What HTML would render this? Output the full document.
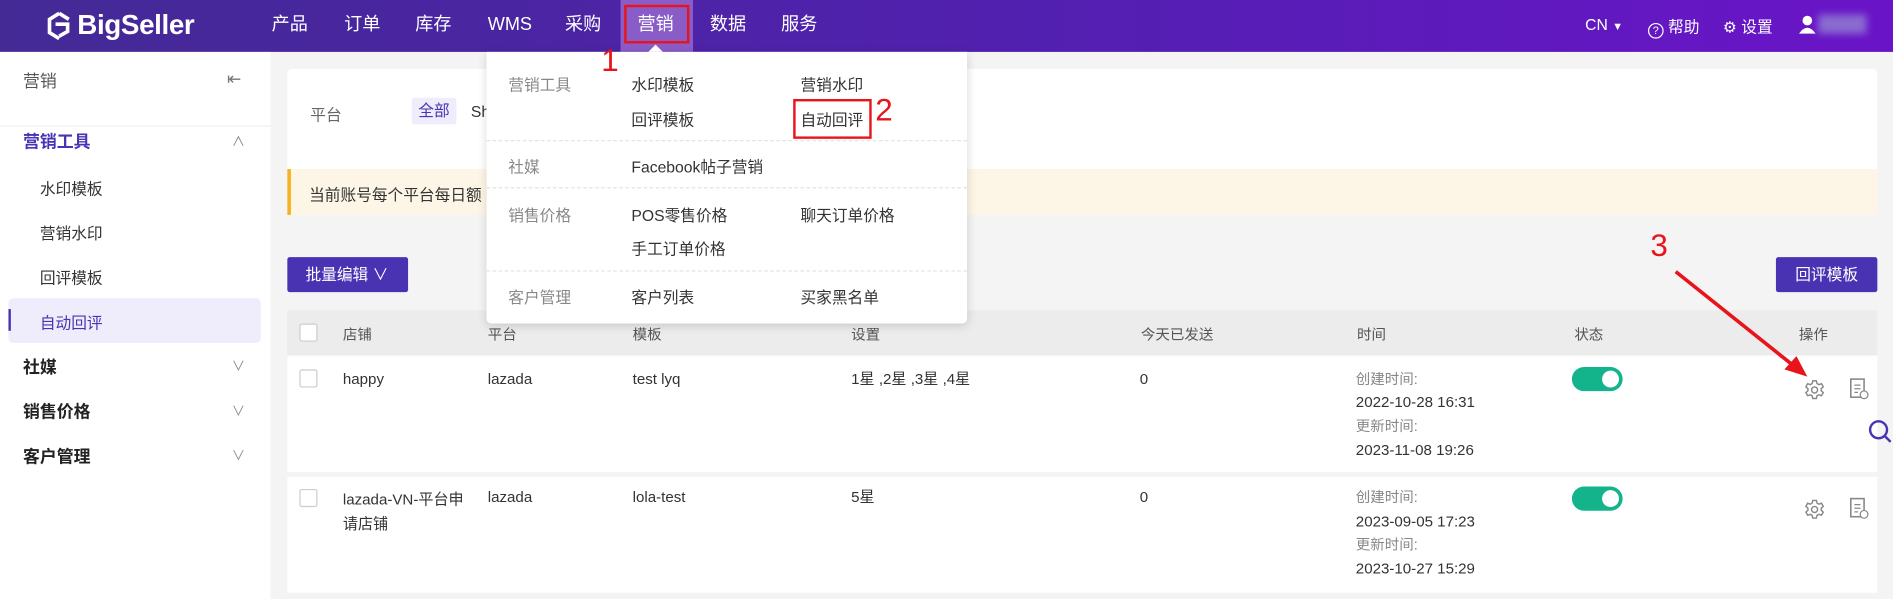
<!DOCTYPE html>
<html><head><meta charset="utf-8"><style>
html,body{margin:0;padding:0;width:1893px;height:599px;overflow:hidden;background:#f4f4f4}
#w{position:absolute;left:0;top:0;width:1568px;height:496px;transform:scale(1.2073);transform-origin:0 0;font-family:"Liberation Sans","Noto Sans CJK SC",sans-serif;font-size:13px;color:#333;background:#f4f4f4}
.a{position:absolute;white-space:nowrap}
#hd{position:absolute;left:0;top:0;width:1568px;height:43px;background:linear-gradient(90deg,#432a95,#5220b0 55%,#6a14c8)}
.nav{color:#fff;font-size:15px;top:11px;line-height:20px;height:20px}
#sb{position:absolute;left:0;top:43px;width:224px;height:453px;background:#fff}
.mi{left:33px;font-size:13px;color:#333}
.mg{left:19px;font-size:14px;font-weight:bold;color:#222}
.chev{left:192px;color:#888;font-size:11px}
.card{position:absolute;background:#fff;border-radius:4px}
.th{top:268px;color:#555;font-size:12px}
.td{font-size:12.5px;color:#333;line-height:16px}
.tm{font-size:12px;color:#888;line-height:16px}
.tog{position:absolute;width:42px;height:20px;border-radius:10px;background:#13b38b}
.tog:after{content:"";position:absolute;right:3px;top:3px;width:14px;height:14px;border-radius:7px;background:#fff}
.cb{position:absolute;width:13px;height:13px;border:1px solid #ccc;border-radius:2px;background:#fff}
#dd{position:absolute;left:403px;top:43px;width:398px;height:225px;background:#fff;box-shadow:0 2px 8px rgba(0,0,0,.15);border-radius:0 0 4px 4px}
.dl{color:#888;font-size:13px}.di{color:#333;font-size:13px}
.sep{position:absolute;left:0;width:398px;border-top:1px dashed #e4e4e4}
.red{position:absolute;border:2px solid #e8141b}
.rn{color:#e8141b;font-size:26px;font-family:"Liberation Sans",sans-serif}
</style></head><body><div id="w">
<div id="hd">
<svg class="a" style="left:38px;top:9px" width="22" height="26" viewBox="0 0 22 26"><path d="M11 2 L3 7 V18 L11 23 M11 2 L19 7 M8 11 H18 V17 L11 21" fill="none" stroke="#fff" stroke-width="3"/></svg>
<div class="a" style="left:64px;top:7px;color:#fff;font-size:23px;font-weight:bold;letter-spacing:-0.3px">BigSeller</div>
<div class="a nav" style="left:225px">产品</div><div class="a nav" style="left:285px">订单</div><div class="a nav" style="left:344px">库存</div><div class="a nav" style="left:404px">WMS</div><div class="a nav" style="left:468px">采购</div>
<div class="a" style="left:514px;top:0;width:60px;height:43px;background:#8a5cc8"></div>
<div class="a nav" style="left:528px">营销</div><div class="a nav" style="left:588px">数据</div><div class="a nav" style="left:647px">服务</div>
<div class="a" style="left:1313px;top:13px;color:#fff;font-size:13px">CN <span style="font-size:9px">▼</span></div>
<div class="a" style="left:1365px;top:12px;color:#fff;font-size:13px"><span style="display:inline-block;width:11px;height:11px;border:1.5px solid #fff;border-radius:50%;font-size:9px;text-align:center;line-height:11px;vertical-align:-1px">?</span> 帮助</div>
<div class="a" style="left:1427px;top:12px;color:#fff;font-size:13px">⚙ 设置</div>
<svg class="a" style="left:1489px;top:12px" width="16" height="16"><circle cx="8" cy="5" r="4" fill="#fff"/><path d="M1 16 Q8 6 15 16Z" fill="#fff"/></svg>
<div class="a" style="left:1506px;top:12px;width:40px;height:16px;background:#8a6bd0;filter:blur(3px)"></div>
</div>
<div id="sb">
<div class="a" style="left:19px;top:14px;font-size:14px;color:#555">营销</div>
<div class="a" style="left:188px;top:14px;color:#777;font-size:14px">⇤</div>
<div class="a" style="left:0;top:61px;width:224px;border-top:1px solid #eee"></div>
<div class="a mg" style="top:64px;color:#4a33b3">营销工具</div><div class="a chev" style="top:66px">∧</div>
<div class="a mi" style="top:103px">水印模板</div><div class="a mi" style="top:140px">营销水印</div><div class="a mi" style="top:177px">回评模板</div>
<div class="a" style="left:7px;top:204px;width:209px;height:37px;background:#efecfb;border-radius:4px"></div>
<div class="a" style="left:7px;top:213px;width:2px;height:18px;background:#4a33b3"></div>
<div class="a mi" style="top:214px;color:#4a33b3">自动回评</div>
<div class="a mg" style="top:251px">社媒</div><div class="a chev" style="top:252px">∨</div>
<div class="a mg" style="top:288px">销售价格</div><div class="a chev" style="top:289px">∨</div>
<div class="a mg" style="top:325px">客户管理</div><div class="a chev" style="top:326px">∨</div>
</div>
<div class="card" style="left:238px;top:57px;width:1317px;height:89px"></div>
<div class="a" style="left:257px;top:85px;color:#666">平台</div>
<div class="a" style="left:341px;top:81px;width:37px;height:22px;background:#efecfb;border-radius:2px;color:#4a33b3;text-align:center;line-height:22px">全部</div>
<div class="a" style="left:390px;top:85px">Sh</div>
<div class="a" style="left:238px;top:140px;width:1317px;height:38px;background:#fdf6e6;border-left:3px solid #f5b324;box-sizing:border-box"></div>
<div class="a" style="left:256px;top:151px">当前账号每个平台每日额</div>
<div class="a" style="left:238px;top:213px;width:100px;height:29px;background:#4a33b3;border-radius:2px;color:#fff;line-height:29px;text-indent:15px">批量编辑 ∨</div>
<div class="a" style="left:1471px;top:213px;width:84px;height:29px;background:#4a33b3;border-radius:2px;color:#fff;line-height:29px;text-align:center">回评模板</div>
<div class="a" style="left:238px;top:257px;width:1317px;height:37px;background:#ececec"></div>
<div class="cb" style="left:248px;top:268px"></div>
<div class="a th" style="left:284px">店铺</div><div class="a th" style="left:404px">平台</div><div class="a th" style="left:524px">模板</div><div class="a th" style="left:705px">设置</div><div class="a th" style="left:945px">今天已发送</div><div class="a th" style="left:1124px">时间</div><div class="a th" style="left:1304px">状态</div><div class="a th" style="left:1490px">操作</div>
<div class="card" style="left:238px;top:295px;width:1317px;height:96px;border-radius:0"></div>
<div class="card" style="left:238px;top:395px;width:1317px;height:96px;border-radius:0"></div>
<div class="cb" style="left:248px;top:306px"></div><div class="cb" style="left:248px;top:405px"></div>
<div class="a td" style="left:284px;top:306px">happy</div><div class="a td" style="left:404px;top:306px">lazada</div><div class="a td" style="left:524px;top:306px">test lyq</div><div class="a td" style="left:705px;top:306px">1星 ,2星 ,3星 ,4星</div><div class="a td" style="left:944px;top:306px">0</div>
<div class="a tm" style="left:1123px;top:306px">创建时间:</div><div class="a td" style="left:1123px;top:325px">2022-10-28 16:31</div><div class="a tm" style="left:1123px;top:345px">更新时间:</div><div class="a td" style="left:1123px;top:365px">2023-11-08 19:26</div>
<div class="tog" style="left:1302px;top:304px"></div>
<div class="a td" style="left:284px;top:404px;line-height:20px">lazada-VN-平台申<br>请店铺</div><div class="a td" style="left:404px;top:404px">lazada</div><div class="a td" style="left:524px;top:404px">lola-test</div><div class="a td" style="left:705px;top:404px">5星</div><div class="a td" style="left:944px;top:404px">0</div>
<div class="a tm" style="left:1123px;top:404px">创建时间:</div><div class="a td" style="left:1123px;top:424px">2023-09-05 17:23</div><div class="a tm" style="left:1123px;top:443px">更新时间:</div><div class="a td" style="left:1123px;top:463px">2023-10-27 15:29</div>
<div class="tog" style="left:1302px;top:403px"></div>
<svg class="a" style="left:1494px;top:314px" width="18" height="18" viewBox="0 0 18 18"><path d="M7.5 1.5h3l.5 2.2 1.6.9 2.1-.8 1.5 2.6-1.7 1.5v1.8l1.7 1.5-1.5 2.6-2.1-.8-1.6.9-.5 2.2h-3l-.5-2.2-1.6-.9-2.1.8-1.5-2.6 1.7-1.5V7.9L1.8 6.4l1.5-2.6 2.1.8 1.6-.9z" fill="none" stroke="#888" stroke-width="1.2"/><circle cx="9" cy="9" r="2.5" fill="none" stroke="#888" stroke-width="1.2"/></svg>
<svg class="a" style="left:1494px;top:413px" width="18" height="18" viewBox="0 0 18 18"><path d="M7.5 1.5h3l.5 2.2 1.6.9 2.1-.8 1.5 2.6-1.7 1.5v1.8l1.7 1.5-1.5 2.6-2.1-.8-1.6.9-.5 2.2h-3l-.5-2.2-1.6-.9-2.1.8-1.5-2.6 1.7-1.5V7.9L1.8 6.4l1.5-2.6 2.1.8 1.6-.9z" fill="none" stroke="#888" stroke-width="1.2"/><circle cx="9" cy="9" r="2.5" fill="none" stroke="#888" stroke-width="1.2"/></svg>
<svg class="a" style="left:1532px;top:313px" width="16" height="18"><rect x="1" y="1" width="11" height="15" fill="none" stroke="#888" stroke-width="1.3"/><path d="M4 6h5M4 9h5M4 12h3" stroke="#888"/><circle cx="12" cy="14" r="3.2" fill="#fff" stroke="#888"/></svg>
<svg class="a" style="left:1532px;top:412px" width="16" height="18"><rect x="1" y="1" width="11" height="15" fill="none" stroke="#888" stroke-width="1.3"/><path d="M4 6h5M4 9h5M4 12h3" stroke="#888"/><circle cx="12" cy="14" r="3.2" fill="#fff" stroke="#888"/></svg>
<svg class="a" style="left:1546px;top:346px" width="22" height="24"><circle cx="10" cy="10" r="7" fill="none" stroke="#4a33b3" stroke-width="2"/><path d="M15 15l5 5" stroke="#4a33b3" stroke-width="2"/></svg>
<div id="dd">
<div class="a dl" style="left:18px;top:17px">营销工具</div><div class="a di" style="left:120px;top:17px">水印模板</div><div class="a di" style="left:260px;top:17px">营销水印</div>
<div class="a di" style="left:120px;top:46px">回评模板</div><div class="a di" style="left:260px;top:46px">自动回评</div>
<div class="sep" style="top:73px"></div>
<div class="a dl" style="left:18px;top:85px">社媒</div><div class="a di" style="left:120px;top:85px">Facebook帖子营销</div>
<div class="sep" style="top:112px"></div>
<div class="a dl" style="left:18px;top:125px">销售价格</div><div class="a di" style="left:120px;top:125px">POS零售价格</div><div class="a di" style="left:260px;top:125px">聊天订单价格</div>
<div class="a di" style="left:120px;top:153px">手工订单价格</div>
<div class="sep" style="top:181px"></div>
<div class="a dl" style="left:18px;top:193px">客户管理</div><div class="a di" style="left:120px;top:193px">客户列表</div><div class="a di" style="left:260px;top:193px">买家黑名单</div>
</div>
<div class="a" style="left:537px;top:37px;width:0;height:0;border:6px solid transparent;border-bottom-color:#fff;border-top:0"></div>
<div class="red" style="left:517px;top:4px;width:50px;height:28px"></div>
<div class="a rn" style="left:498px;top:35px">1</div>
<div class="red" style="left:657px;top:82px;width:61px;height:29px"></div>
<div class="a rn" style="left:725px;top:76px">2</div>
<div class="a rn" style="left:1367px;top:188px">3</div>
<svg class="a" style="left:1380px;top:220px" width="130" height="100"><path d="M8 5 L112 88" stroke="#e8141b" stroke-width="3"/><path d="M117 92 L98 86 L108 75Z" fill="#e8141b"/></svg>
</div></body></html>
